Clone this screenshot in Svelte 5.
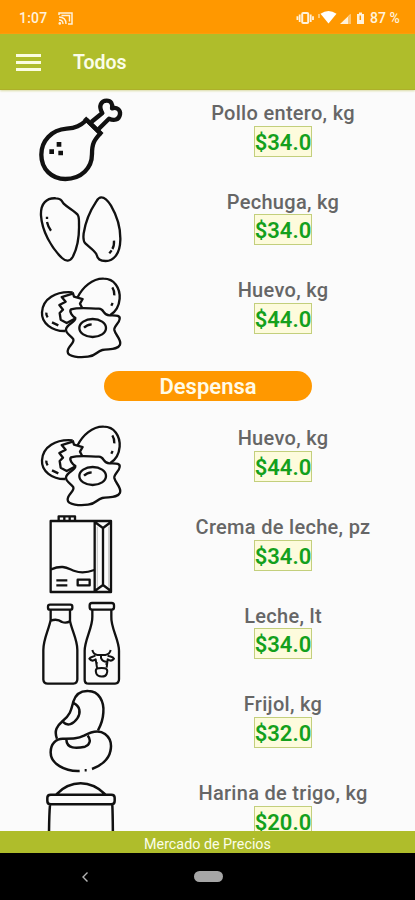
<script lang="ts">
  type Item = { icon: string; name: string; price: string };

  const sections: { title: string; items: Item[] }[] = [
    {
      title: '',
      items: [
        { icon: 'pollo', name: 'Pollo entero, kg', price: '34.0' },
        { icon: 'pechuga', name: 'Pechuga, kg', price: '34.0' },
        { icon: 'huevo', name: 'Huevo, kg', price: '44.0' }
      ]
    },
    {
      title: 'Despensa',
      items: [
        { icon: 'huevo', name: 'Huevo, kg', price: '44.0' },
        { icon: 'crema', name: 'Crema de leche, pz', price: '34.0' },
        { icon: 'leche', name: 'Leche, lt', price: '34.0' },
        { icon: 'frijol', name: 'Frijol, kg', price: '32.0' },
        { icon: 'harina', name: 'Harina de trigo, kg', price: '20.0' }
      ]
    }
  ];
</script>

{#snippet picture(icon: string)}
  {#if icon === 'pollo'}
    <svg class="picture" viewBox="0 15 330 266" stroke-width="13">
      <path d="M170 90C150 108 138 114 110 116C64 120 34 152 34 194C34 238 66 267 106 267C154 267 186 234 186 192C186 160 193 150 211 130Z" />
      <path d="M184 96L217 69C204 47 214 32 230 32C243 32 249 42 246 55C261 50 272 60 270 73C267 90 252 93 237 86L206 117" />
      <path d="M164 84L216 134" />
      <path class="solid" d="M80 156h14v14h-14zM58 178h14v14H58zM85 182h14v14H85z" />
    </svg>
  {:else if icon === 'pechuga'}
    <svg class="picture" viewBox="0 -4 330 266" stroke-width="7">
      <path d="M78 39C92 39 95 46 101 55C113 67 132 76 142 87C148 94 147 103 147 117C148 152 144 184 128 215C120 229 108 229 96 218C64 188 36 137 33 91C31 54 50 37 78 39Z" />
      <path d="M214 36C226 36 234 46 243 61C261 92 272 126 271 164C270 207 250 227 227 227C210 227 203 222 199 206C192 194 175 183 166 174C158 167 160 157 161 144C166 111 183 72 199 48C204 39 207 36 214 36Z" />
      <path d="M51 94v7M51 110Q54 124 63 136M252 166Q253 182 247 191M245 195L238 204" />
    </svg>
  {:else if icon === 'huevo'}
    <svg class="picture" viewBox="0 7 330 266" stroke-width="7">
      <path d="M142 84C158 52 187 26 221 27C253 27 271 55 269 87C267 112 255 128 240 137" />
      <path d="M128 68C77 64 38 87 36 128C34 160 66 185 106 184" />
      <path d="M128 68L132 81L158 88L150 102L157 116M128 72L95 82L107 96L88 106L99 120L89 130L92 150L110 160L137 146" />
      <path d="M123 119C149 112 180 117 207 117C224 117 218 138 239 137C253 138 271 135 269 148C268 161 251 168 253 181C256 196 276 211 270 225C263 241 239 237 217 241C199 245 199 259 174 261C150 264 113 262 113 246C112 230 134 221 130 209C125 198 107 193 108 179C110 163 137 158 136 145C129 140 116 127 123 119Z" />
      <ellipse cx="188" cy="175" rx="40" ry="27" />
      <path d="M162 174Q171 165 185 164M247 53Q254 64 253 77M248 100L244 108M49 129Q48 136 53 143M66 158L85 167" />
    </svg>
  {:else if icon === 'crema'}
    <svg class="picture" viewBox="0 12 330 266" stroke-width="7">
      <path class="pleat" d="M236 65V245M202 65V245" />
      <path d="M62 48H243V261H62ZM194 48V261M219 69V239M194 51L219 69L243 51M194 258L219 240L243 258" />
      <path d="M86 48V34H135V48M103 34V48M119 34V48M63 193C100 178 112 190 134 198C153 205 174 202 193 195M79 226H112M79 241H112M143 224H179V241H143Z" />
    </svg>
  {:else if icon === 'leche'}
    <svg class="picture" viewBox="0 8 330 266" stroke-width="7">
      <rect x="54" y="28" width="73" height="15" rx="6" />
      <path d="M62 44V74C55 107 40 132 40 164V253Q41 265 53 265H130Q142 264 142 252V163C142 133 126 107 120 77V44M62 76C78 70 86 72 96 80Q109 85 121 77" />
      <rect x="179" y="23" width="73" height="20" rx="7" />
      <path d="M187 44V64C188 96 164 133 164 166V253Q164 265 176 265H255Q267 264 267 252V166C267 133 242 97 244 64V44" />
      <path class="cow" d="M187 164Q190 177 202 179H226Q239 177 242 164M196 181C188 185 181 184 178 190C184 199 191 196 197 192L201 217M233 181C241 185 248 183 252 190C246 199 239 196 233 192L230 217M213 179V188Q219 201 233 199M199 235C193 218 204 218 215 218C227 218 236 220 230 236C225 247 204 246 199 235ZM200 200V207M229 204V208" />
    </svg>
  {:else if icon === 'frijol'}
    <svg class="picture" viewBox="0 5 330 266" stroke-width="7.5">
      <path d="M81 163C71 139 82 124 98 110C122 91 124 75 130 52C137 29 155 19 175 20C207 20 223 52 220 85C219 105 213 122 204 138" />
      <path d="M130 56C151 65 153 86 142 102C130 119 113 128 98 112" />
      <path d="M149 260C105 262 61 238 62 203C62 179 78 163 98 163C126 163 141 164 162 154C189 139 208 136 225 149C241 161 246 180 241 201C236 226 212 245 186 254M109 165C110 194 139 193 165 187C180 182 184 166 173 154M164 258h6" />
    </svg>
  {:else}
    <svg class="picture" viewBox="0 16 330 266" stroke-width="7.5">
      <path d="M79 74Q111 41 152 41Q192 41 226 74M62 75H244Q254 75 254 84V94Q254 104 244 104H62Q52 104 52 94V84Q52 75 62 75ZM60 106Q56 150 57 282M247 106Q249 150 249 282" />
    </svg>
  {/if}
{/snippet}

<div class="screen">
  <div class="status">
    <span class="clock">1:07</span>
    <svg class="cast" width="15" height="13" viewBox="0 0 15 13">
      <path d="M1 3V1H14V12H10" fill="none" stroke="#fff2dc" stroke-width="1.5" />
      <path d="M1 5Q8 5 8 12M1 8Q5 8 5 12M3.5 3.5H11.5V9.5" fill="none" stroke="#fff2dc" stroke-width="1.4" />
      <circle cx="1.8" cy="11.4" r="1.3" fill="#fff2dc" />
    </svg>
    <svg class="signals" width="72" height="16" viewBox="0 0 72 16">
      <rect x="6.2" y="3" width="6" height="10" rx="1" fill="none" stroke="#fff2dc" stroke-width="2" />
      <path d="M3.7 4.5V12M1.4 6.3V10M14.7 4.5V12M17 6.3V10" stroke="#fff2dc" stroke-width="1.8" />
      <path d="M23 4V8" stroke="#ffe0ad" stroke-width="1.3" />
      <path d="M24.5 3.7Q32.5 -1.5 40.5 3.7L32.5 13.5Z" fill="#fff" />
      <path d="M44 14L54.5 4V14Z" fill="#fff2dc" />
      <path d="M52 6.5L54.5 4V14H52Z" fill="#ffc56f" />
      <path d="M61 4H63V2.5H66V4H68V14H61Z" fill="#fff2dc" />
      <path d="M64.3 5.5V10" stroke="#ff9800" stroke-width="1.5" />
    </svg>
    <span class="battery">87 %</span>
  </div>

  <header>
    <div class="menu"><i></i><i></i><i></i></div>
    <h1>Todos</h1>
  </header>

  <main>
    {#each sections as section}
      {#if section.title}
        <div class="divider"><h2>{section.title}</h2></div>
      {/if}
      {#each section.items as item}
        <div class="row">
          {@render picture(item.icon)}
          <div class="info">
            <span class="name">{item.name}</span>
            <span class="price">${item.price}</span>
          </div>
        </div>
      {/each}
    {/each}
  </main>

  <footer>Mercado de Precios</footer>

  <nav>
    <svg width="8" height="12" viewBox="0 0 8 12">
      <path d="M6.5 1.5L2 6L6.5 10.5" fill="none" stroke="#b5b5b5" stroke-width="1.4" />
    </svg>
    <span class="home"></span>
  </nav>
</div>

<style>
  :global(body) {
    margin: 0;
  }
  .screen {
    display: flex;
    flex-direction: column;
    width: 415px;
    height: 900px;
    overflow: hidden;
    background: #fbfbfb;
    font-family: Roboto, sans-serif;
    font-weight: 500;
  }
  .status {
    display: flex;
    flex: none;
    align-items: center;
    box-sizing: border-box;
    height: 34px;
    padding: 2px 15px 0 19px;
    background: #ff9800;
    color: #fff2dc;
    font-size: 14px;
  }
  .clock {
    width: 39px;
    letter-spacing: 0.2px;
  }
  .signals {
    margin-left: auto;
    margin-right: 2px;
  }
  .battery {
    width: 30px;
    white-space: nowrap;
  }
  header {
    display: flex;
    flex: none;
    align-items: center;
    box-sizing: border-box;
    height: 56px;
    padding-left: 16px;
    border-bottom: 1px solid #adb02a;
    background: #afbd2b;
    box-shadow: 0 1px 2px #d9dba5;
  }
  .menu {
    display: flex;
    flex-direction: column;
    gap: 4px;
    width: 25px;
    margin: 1px 32px 0 0;
  }
  .menu i {
    height: 3px;
    background: #fbfde0;
  }
  h1 {
    margin: 2px 0 0;
    color: #fbfde8;
    font-size: 19.5px;
    font-weight: 600;
  }
  main {
    flex: 1;
    min-height: 0;
    padding-top: 5px;
    overflow: hidden;
  }
  .row {
    display: flex;
    height: 88.7px;
    padding-left: 30px;
  }
  .picture {
    flex: none;
    width: 110px;
    height: 88.7px;
    overflow: visible;
    fill: none;
    stroke: #111;
    stroke-linejoin: round;
  }
  .solid {
    fill: #111;
    stroke: none;
  }
  .pleat {
    stroke: #ccc;
    stroke-width: 4;
  }
  .cow {
    stroke-width: 6;
  }
  .info {
    display: flex;
    flex: 1;
    flex-direction: column;
    align-items: center;
    padding: 6px 0 0 11px;
  }
  .name {
    color: #666;
    font-size: 20px;
    line-height: 24px;
    letter-spacing: 0.3px;
  }
  .price {
    box-sizing: border-box;
    height: 31px;
    margin-top: 0.6px;
    border: 1px solid #c3cf7c;
    background: #fdfbdc;
    color: #14a01c;
    font-size: 22px;
    font-weight: 600;
    line-height: 31px;
  }
  .divider {
    display: flex;
    justify-content: center;
    box-sizing: border-box;
    height: 59.3px;
    padding-top: 10px;
  }
  h2 {
    width: 208px;
    height: 30px;
    margin: 0;
    border-radius: 15px;
    background: #ff9800;
    color: #fffbe8;
    font-size: 22px;
    font-weight: 600;
    line-height: 31px;
    text-align: center;
    text-indent: 1px;
  }
  footer {
    flex: none;
    height: 22px;
    background: #afbd2b;
    color: #fbfde8;
    font-size: 14.3px;
    font-weight: 400;
    line-height: 27px;
    text-align: center;
  }
  nav {
    display: flex;
    flex: none;
    align-items: center;
    box-sizing: border-box;
    height: 47px;
    padding: 0 0 0 81px;
    background: #000;
  }
  .home {
    width: 29px;
    height: 11px;
    margin-left: 105px;
    border-radius: 6px;
    background: #a6a6a6;
  }
</style>
